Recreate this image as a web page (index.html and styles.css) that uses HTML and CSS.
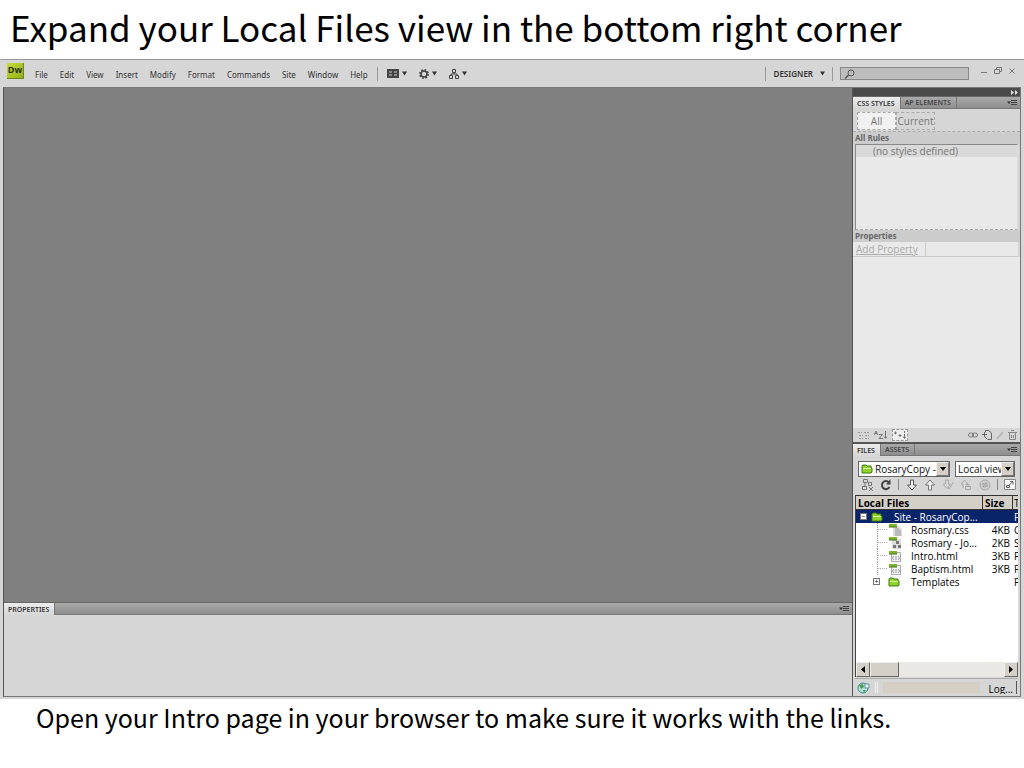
FILE: index.html
```html
<!DOCTYPE html>
<html lang="en">
<head>
<meta charset="utf-8">
<title>Expand your Local Files view</title>
<link rel="stylesheet" href="styles.css">
</head>
<body>
<svg class="sprite" aria-hidden="true">
  <symbol id="folder" viewBox="0 0 12 10"><path d="M1 9V2l1-1h3l1 1h4v2h1v4l-1 1z" fill="#8fd32c" stroke="#3f7a12"/><path d="M2 4.500h8" stroke="#d9f7a0"/></symbol>
  <symbol id="menu" viewBox="0 0 11 7"><path d="M0 2.500h4L2 5z" fill="#333"/><path d="M4 1.500h6M4 3.500h6M4 5.500h6" stroke="#444"/></symbol>
  <symbol id="caret" viewBox="0 0 6 5"><path d="M0 0h6L3 5z" fill="#333"/></symbol>
  <symbol id="html" viewBox="0 0 14 12"><path d="M3.500 2.500h9v9h-9z" fill="#f4f4f4" stroke="#aaa"/><path d="M1 1h8v3H1z" fill="#7db52a"/><path d="M1 4h8" stroke="#456f12"/><path d="M6 6L4.500 8 6 10M10 6l1.500 2L10 10M8 6v4" fill="none" stroke="#999"/></symbol>
  <symbol id="css" viewBox="0 0 14 12"><path d="M5 2h6l3 3v7H5z" fill="#ddd"/><path d="M7 5h4M7 7h6M7 9h6M7 11h6" stroke="#999"/><path d="M1 0h8v3H1z" fill="#7db52a"/><path d="M1 3h8" stroke="#456f12"/></symbol>
  <symbol id="ste" viewBox="0 0 14 12"><path d="M4 2h9v10H4z" fill="#ddd"/><path d="M8 4h3v3H8zM5 8h3v3H5zM10 8h3v3h-3z" fill="#777"/><path d="M1 0h8v3H1z" fill="#7db52a"/><path d="M1 3h8" stroke="#456f12"/></symbol>
</svg>

<h1 class="slide-title">Expand your Local Files view in the bottom right corner</h1>

<main class="app">
  <header class="menubar">
    <svg class="logo" viewBox="0 0 17 16" role="img" aria-label="Dw"><defs><linearGradient id="lime" x2="1" y2="1"><stop stop-color="#c9dc3c"/><stop offset="1" stop-color="#8fac14"/></linearGradient></defs><path d="M0 0h17v16H0z" fill="url(#lime)"/><path d="M0 15.500h16.500V0" fill="none" stroke="#6f8716"/><text x="8" y="10" text-anchor="middle" class="logo-text">Dw</text></svg>
    <nav class="menus">
      <button>File</button><button>Edit</button><button>View</button><button>Insert</button><button>Modify</button><button>Format</button><button>Commands</button><button>Site</button><button>Window</button><button>Help</button>
    </nav>
    <div class="bar-tools">
      <button aria-label="Layout"><svg width="12" height="9" viewBox="0 0 12 9"><path d="M0 0h12v9H0z" fill="#444"/><path d="M2 2h3v2H2zM2 5h3v2H2zM7 2h3v2H7zM7 5h3v2H7z" fill="#888"/></svg><svg width="5" height="5"><use href="#caret"/></svg></button>
      <button aria-label="Extend"><svg width="10" height="10" viewBox="0 0 10 10"><circle cx="5" cy="5" r="4.200" fill="none" stroke="#444" stroke-width="1.500" stroke-dasharray="1.700 1.600"/><circle cx="5" cy="5" r="3" fill="none" stroke="#444" stroke-width="1.600"/></svg><svg width="5" height="5"><use href="#caret"/></svg></button>
      <button aria-label="Site"><svg width="10" height="10" viewBox="0 0 10 10"><path d="M3.500.5h3v3h-3zM.5 6.500h3v3h-3zM6.500 6.500h3v3h-3zM5 3.500V5M2 6.500V5h6v1.500" fill="none" stroke="#444"/></svg><svg width="5" height="5"><use href="#caret"/></svg></button>
    </div>
    <button class="workspace-name">DESIGNER <svg width="5" height="5"><use href="#caret"/></svg></button>
    <label class="search"><svg width="11" height="10" viewBox="0 0 11 10"><circle cx="7" cy="4" r="3" fill="none" stroke="#555"/><path d="M4.500 6L1 9.500" stroke="#555" stroke-width="1.500"/></svg><input type="text" aria-label="Search"></label>
    <div class="window-buttons">
      <button aria-label="Minimize"><svg width="8" height="8" viewBox="0 0 8 8"><path d="M1 5.500h6" stroke="#777"/></svg></button>
      <button aria-label="Restore"><svg width="8" height="8" viewBox="0 0 8 8"><path d="M2.500 2.500v-2h5v4h-2M.5 2.500h5v4h-5z" fill="none" stroke="#777"/></svg></button>
      <button aria-label="Close"><svg width="8" height="8" viewBox="0 0 8 8"><path d="M1.500 1.500l5 5M6.500 1.500l-5 5" stroke="#777"/></svg></button>
    </div>
  </header>

  <div class="workspace">
    <section class="editor">
      <div class="canvas"></div>
      <div class="tabs"><button class="tab active">PROPERTIES</button><svg class="panel-menu"><use href="#menu"/></svg></div>
      <div class="inspector"></div>
    </section>

    <aside class="dock">
      <div class="dock-top"><svg width="7" height="5" viewBox="0 0 7 5"><path d="M0 0l3 2.500L0 5zM4 0l3 2.500L4 5z" fill="#ddd"/></svg></div>
      <div class="tabs"><button class="tab active">CSS STYLES</button><button class="tab">AP ELEMENTS</button><svg class="panel-menu"><use href="#menu"/></svg></div>
      <section class="css-panel">
        <div class="switch"><button class="on">All</button><button>Current</button></div>
        <h2 class="strip">All Rules</h2>
        <div class="rules"><p>(no styles defined)</p></div>
        <h2 class="strip">Properties</h2>
        <div class="add-row"><a href="#">Add Property</a></div>
        <div class="blank"></div>
        <div class="css-tools">
          <svg width="12" height="9" viewBox="0 0 12 9"><path d="M0 1.500h4M1 4.500h4M1 7.500h4M6 1.500h5M7 4.500h4M7 7.500h4" stroke="#999" stroke-dasharray="2 1"/></svg>
          <svg width="14" height="10" viewBox="0 0 14 10"><path d="M0 5l2-4 2 4M1 3.500h2M5 4.500h3.500L5 8.500h4M11.500 1v7M10 6.500l1.500 2 1.500-2" fill="none" stroke="#777"/></svg>
          <button class="boxed" aria-label="Show set properties"><svg width="12" height="8" viewBox="0 0 12 8"><path d="M0 2h3M1.500.5v3M4.500 4.500h3M6 3v3M10.500 0v2M10.500 3v4M9 5.500l1.500 2 1.500-2" fill="none" stroke="#777"/></svg></button>
          <svg class="push" width="10" height="8" viewBox="0 0 10 8"><rect x=".5" y="2" width="5" height="4" rx="2" fill="none" stroke="#777"/><rect x="4.500" y="2" width="5" height="4" rx="2" fill="none" stroke="#777"/></svg>
          <svg width="10" height="10" viewBox="0 0 10 10"><path d="M3.500 2V.5h3L9.500 3v6.500h-4M0 4.500h5M2.500 2v5M3 7l2 2" fill="none" stroke="#666"/></svg>
          <svg width="8" height="9" viewBox="0 0 8 9"><path d="M1 8l6-7" stroke="#bbb" stroke-width="2"/></svg>
          <svg width="9" height="10" viewBox="0 0 9 10"><path d="M0 2.500h9M3 .5h3M1.500 3v6.500h6V3M3.500 5v3M5.500 5v3" fill="none" stroke="#888"/></svg>
        </div>
      </section>

      <div class="tabs files-tabs"><button class="tab active">FILES</button><button class="tab">ASSETS</button><svg class="panel-menu"><use href="#menu"/></svg></div>
      <section class="files-panel">
        <div class="selects">
          <div class="combo site"><svg width="12" height="10"><use href="#folder"/></svg><select aria-label="Site"><option>RosaryCopy -</option></select><span class="drop"></span></div>
          <div class="combo view"><select aria-label="View"><option>Local view</option></select><span class="drop"></span></div>
        </div>
        <div class="file-tools">
          <button aria-label="Connect"><svg width="13" height="12" viewBox="0 0 13 12"><path d="M2.500.500h4v3h-4zM7.500 3.500h3v3h-3zM1.500 7.500h4v3h-4zM4 4v3M8 8l4 4M12 8l-4 4" fill="none" stroke="#777"/></svg></button>
          <button aria-label="Refresh"><svg width="12" height="12" viewBox="0 0 12 12"><path d="M9.500 8A4 4 0 1 1 9 3.500" fill="none" stroke="#444" stroke-width="2"/><path d="M10.500 0v5.500H6z" fill="#444"/></svg></button>
          <i></i>
          <button aria-label="Get files"><svg width="12" height="12" viewBox="0 0 12 12"><path d="M4.500 1h3v5h3L6 11 1.500 6h3z" fill="#eee" stroke="#555"/></svg></button>
          <button aria-label="Put files"><svg width="12" height="12" viewBox="0 0 12 12"><path d="M4.500 11h3V6h3L6 1 1.500 6h3z" fill="#eee" stroke="#777"/></svg></button>
          <button aria-label="Check out"><svg width="12" height="12" viewBox="0 0 12 12"><path d="M3.500 1h3v4h2L5 9.500 1 5h2.500zM6 8l1 2 4.500-7" fill="none" stroke="#aaa"/></svg></button>
          <button aria-label="Check in"><svg width="12" height="12" viewBox="0 0 12 12"><path d="M3 9V5H1l3.500-4L8 5H6v1M5.500 7.500h5v3h-5zM7 7V5.500h2V7" fill="none" stroke="#aaa"/></svg></button>
          <button aria-label="Synchronize"><svg width="12" height="12" viewBox="0 0 12 12"><circle cx="6" cy="6" r="5" fill="#ccc" stroke="#aaa"/><path d="M3 5h5L7 3.500M9 7H4l1 1.500" fill="none" stroke="#999"/></svg></button>
          <i></i>
          <button aria-label="Expand"><svg width="12" height="12" viewBox="0 0 12 12"><path d="M.5.500h11v10H.5z" fill="#f7f7f7" stroke="#888"/><path d="M5 6l4-3.500M6 2.500h3v3M2.500 6.500h3v2h-3z" fill="none" stroke="#666"/></svg></button>
        </div>
        <div class="tree">
          <table>
            <colgroup><col class="c-name"><col class="c-size"><col></colgroup>
            <thead><tr><th>Local Files</th><th>Size</th><th>T</th></tr></thead>
            <tbody>
              <tr class="selected"><td><div class="node root"><span class="toggle">−</span><svg><use href="#folder"/></svg>Site - RosaryCop...</div></td><td></td><td>F</td></tr>
              <tr><td><div class="node"><span class="line"></span><svg><use href="#css"/></svg>Rosmary.css</div></td><td>4KB</td><td>C</td></tr>
              <tr><td><div class="node"><span class="line"></span><svg><use href="#ste"/></svg>Rosmary - Jo...</div></td><td>2KB</td><td>S</td></tr>
              <tr><td><div class="node"><span class="line"></span><svg><use href="#html"/></svg>Intro.html</div></td><td>3KB</td><td>F</td></tr>
              <tr><td><div class="node"><span class="line"></span><svg><use href="#html"/></svg>Baptism.html</div></td><td>3KB</td><td>F</td></tr>
              <tr><td><div class="node closed"><span class="toggle">+</span><svg><use href="#folder"/></svg>Templates</div></td><td></td><td>F</td></tr>
            </tbody>
          </table>
          <div class="scroll"><button aria-label="Scroll left"><svg width="4" height="7" viewBox="0 0 4 7"><path d="M4 0v7L0 3.500z"/></svg></button><span class="thumb"></span><button class="push" aria-label="Scroll right"><svg width="4" height="7" viewBox="0 0 4 7"><path d="M0 0v7l4-3.500z"/></svg></button></div>
        </div>
        <div class="status"><svg width="13" height="12" viewBox="0 0 13 12"><circle cx="6" cy="6" r="5" fill="#b8dcd8" stroke="#3b8f96"/><path d="M2 3l4-1 1 3-3 2zM6 8l3 0-2 3z" fill="#4aa04c"/><path d="M8 2h4v4H8z" fill="#eee" stroke="#5a9aa0"/></svg><i></i><span class="progress"></span><button>Log...</button></div>
      </section>
    </aside>
  </div>
</main>

<p class="slide-note">Open your Intro page in your browser to make sure it works with the links.</p>
</body>
</html>
```
FILE: styles.css
```css
* { box-sizing: border-box; }
body { margin: 0; min-height: 100vh; display: flex; flex-direction: column; background: #fff; color: #000; font-family: "Noto Sans", sans-serif; }
button { margin: 0; padding: 0; border: 0; background: none; color: inherit; font: inherit; white-space: nowrap; }
svg { display: block; flex: none; }
.sprite { position: absolute; width: 0; height: 0; }
.push { margin-left: auto; }

.slide-title { margin: 0; height: 59px; padding-left: 10px; font: 400 35px/54px "Noto Sans CJK SC", Lato, sans-serif; white-space: nowrap; }
.slide-note { margin: 0; height: 69px; padding-left: 36px; font: 400 25px/36px "Noto Sans CJK SC", Lato, sans-serif; white-space: nowrap; }

.app { flex: 1; display: flex; flex-direction: column; padding: 0 3px 2px; background: #d6d6d6; border-top: 1px solid #999; }
.menubar { display: flex; align-items: center; height: 27px; padding: 0 5px 0 4px; font-size: 8px; color: #333; }
.logo { width: 17px; height: 16px; margin: 0 11px 5px 0; }
.logo-text { font: 700 9px "Open Sans", sans-serif; fill: #26300a; }
.menus { display: flex; gap: 12px; padding-top: 1px; }
.bar-tools { display: flex; gap: 12px; height: 14px; margin-left: 9px; padding-left: 9px; border-left: 1px solid #999; }
.bar-tools button { display: flex; align-items: center; gap: 3px; }
.workspace-name { display: flex; align-items: center; gap: 7px; height: 14px; margin-left: auto; padding: 0 7px 0 8px; border: solid #999; border-width: 0 1px; font-weight: 600; }
.search { display: flex; align-items: center; width: 129px; height: 13px; margin-left: 7px; padding-left: 3px; background: #bdbdbd; border: 1px solid #888; }
.search input { flex: 1; min-width: 0; height: 11px; padding: 0 2px; border: 0; background: none; font: 8px "Noto Sans", sans-serif; }
.window-buttons { display: flex; gap: 6px; margin: 0 0 6px 11px; }

.workspace { flex: 1; display: grid; grid-template-columns: 1fr 168px; border: 1px solid #777; border-left-color: #555; }
.editor { display: flex; flex-direction: column; }
.canvas { flex: 1; background: #808080; }
.inspector { height: 81px; background: #d6d6d6; }

.tabs { display: flex; align-items: stretch; height: 13px; background: linear-gradient(#a9a9a9, #8e8e8e); border-top: 1px solid #666; border-bottom: 1px solid #777; font-size: 7px; line-height: 11px; font-weight: 600; color: #444; }
.tab { padding: 0 5px 0 4px; border-right: 1px solid #777; }
.tab.active { margin-bottom: -1px; background: linear-gradient(#ececec, #d6d6d6); color: #333; }
.panel-menu { width: 11px; height: 7px; margin: 2px 2px 0 auto; }

.dock { display: flex; flex-direction: column; border-left: 1px solid #555; background: #d6d6d6; min-width: 0; }
.dock-top { display: flex; align-items: center; justify-content: flex-end; height: 8px; padding-right: 2px; background: #4a4a4a; }
.css-panel { flex: 1; display: flex; flex-direction: column; color: #777; font-family: "Open Sans", sans-serif; font-size: 10px; }
.switch { display: flex; padding: 3px 4px 1px; border-bottom: 1px dashed #aaa; height: 23px; }
.switch button { width: 39px; border: 1px dashed #aaa; line-height: 16px; height: 18px; }
.switch .on { background: #f1f1f1; }
.strip { margin: 0; padding-left: 2px; background: #ccc; color: #666; font: 700 8px/12px "Noto Sans", sans-serif; }
.rules { height: 86px; margin: 0 2px; background: #e9e9e9; border: 1px solid #888; border-right-color: #ddd; border-bottom: 1px dashed #aaa; }
.rules p { margin: 0; padding-left: 17px; background: #d9d9d9; line-height: 12px; }
.add-row { height: 15px; margin-right: 2px; padding-left: 3px; background: #e9e9e9; border-bottom: 1px solid #ccc; line-height: 14px; }
.add-row a { display: inline-block; width: 70px; height: 14px; border-right: 1px solid #ccc; color: #aaa; }
.blank { flex: 1; background: #e9e9e9; }
.css-tools { display: flex; align-items: center; gap: 4px; height: 14px; padding: 0 3px 0 5px; }
.boxed { padding: 1px; border: 1px dashed #999; background: #eee; }

.files-tabs { height: 14px; border-top: 2px solid #555; }
.files-panel { height: 240px; padding: 5px 2px 1px; display: flex; flex-direction: column; font: 10px/12px "Open Sans", sans-serif; }
.selects { display: flex; gap: 5px; padding-left: 3px; }
.combo { display: flex; align-items: center; height: 16px; background: #fff; border: 1px solid #666; padding-left: 2px; }
.site { width: 92px; }
.view { width: 60px; }
.combo select { flex: 1; min-width: 0; height: 14px; padding: 0 0 0 2px; border: 0; background: none; appearance: none; color: #111; font: 10px/14px "Open Sans", sans-serif; overflow: hidden; text-overflow: clip; }
.view select { padding-left: 0; }
.drop { width: 13px; height: 14px; background: #d4d0c8; border: 1px solid #777; border-left-color: #eee; border-top-color: #eee; display: grid; place-items: center; }
.drop::before { content: ""; border: 3px solid transparent; border-top: 4px solid #000; border-bottom: 0; }
.file-tools { display: flex; align-items: center; justify-content: space-between; height: 15px; margin-bottom: 3px; padding: 0 2px 0 6px; }
.file-tools i { width: 1px; height: 11px; background: #888; }
.tree { flex: 1; display: flex; flex-direction: column; background: #fff; border-left: 1px solid #444; min-height: 0; overflow: hidden; }
table { width: 100%; table-layout: fixed; border-collapse: separate; border-spacing: 0; }
.c-name { width: 127px; }
.c-size { width: 30px; }
th { height: 15px; padding: 0 2px; background: #d4d0c8; border: 1px solid #333; border-left: 0; text-align: left; font-weight: 700; line-height: 12px; }
th:last-child { border-right: 0; font-weight: 400; }
td { height: 13px; padding: 0; line-height: 12px; white-space: nowrap; }
td:nth-child(2) { text-align: right; padding-right: 3px; }
td:nth-child(3), th:last-child { padding: 0 0 0 1px; }
.selected { background: #0a246a; color: #fff; }
.node { display: flex; align-items: center; height: 13px; padding-left: 21px; }
.node svg { width: 14px; height: 12px; margin-right: 9px; }
.root { padding-left: 4px; }
.root svg { height: 10px; width: 12px; margin: 0 11px 0 4px; }
.closed { padding-left: 17px; }
.closed svg { height: 10px; margin: 0 10px 0 7px; }
.line { width: 11px; height: 13px; border-left: 1px dotted #999; background: repeating-linear-gradient(90deg, #aaa 0 1px, #fff 1px 2px) 0 6px / 11px 1px no-repeat; }
.toggle { width: 7px; height: 7px; border: 1px solid #777; background: #fff; color: #000; font-size: 7px; line-height: 5px; text-align: center; }
.scroll { display: flex; height: 15px; margin-top: auto; background: #eae8e4; }
.scroll button, .thumb { display: grid; place-items: center; width: 14px; background: #d4d0c8; border: 1px solid #666; border-top-color: #eee; border-left-color: #eee; }
.scroll .thumb { width: 29px; }
.status { display: flex; align-items: center; gap: 5px; height: 17px; margin-top: 1px; padding: 1px 1px 0 2px; border-top: 1px solid #aaa; overflow: hidden; }
.status i { width: 3px; height: 11px; border: solid #eee; border-width: 0 1px; }
.progress { flex: 1; height: 11px; background: #d4cec4; }
.status button { height: 13px; padding: 0 3px; border-right: 1px solid #555; line-height: 16px; overflow: hidden; }
```
